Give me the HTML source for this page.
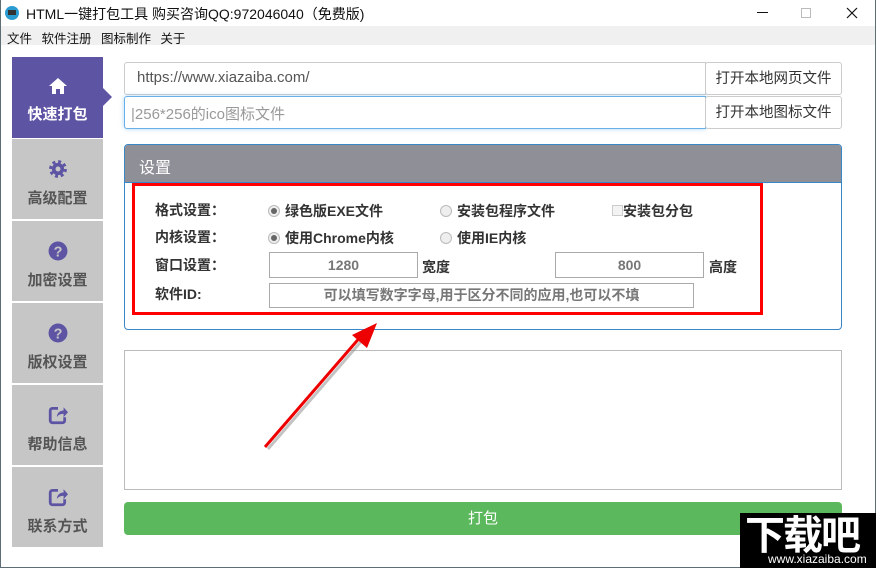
<!DOCTYPE html>
<html><head><meta charset="utf-8"><style>
*{margin:0;padding:0;box-sizing:border-box}
body{width:876px;height:568px;overflow:hidden;background:#fff;font-family:"Liberation Sans","Noto Sans CJK SC",sans-serif;position:relative;font-size:13px;color:#333}
.a{position:absolute}
.side{left:12px;width:91px;background:#c6c6c6;color:#555;text-align:center;font-weight:bold;font-size:15px}
.ic{display:block;margin:0 auto 8px}
.lbl{font-size:14px;color:#333;font-weight:bold}
.opt{font-size:14px;color:#333;font-weight:bold}
.rad{display:inline-block;width:12px;height:12px;border-radius:50%;border:1px solid #bbb;background:#eee;vertical-align:-1px;margin-right:5px;position:relative}
.rad.on::after{content:"";position:absolute;left:2px;top:2px;width:6px;height:6px;border-radius:50%;background:#666}
.box{border:1px solid #aaa;text-align:center;color:#777;font-size:14px;font-weight:bold;background:#fff}
.btn{border:1px solid #ccc;border-radius:3px;background:#fff;font-size:14.5px;color:#333;text-align:center;line-height:32px}
</style></head><body>
<div class="a" style="left:0;top:0;width:876px;height:568px;border:1px solid #5e6e74;border-top:none"></div>
<div class="a" style="left:5px;top:6px;width:14px;height:14px;border-radius:50%;background:#2a9bd0"></div>
<div class="a" style="left:8px;top:10px;width:8px;height:5px;background:#333"></div>
<div class="a" style="left:26px;top:4px;font-size:14px;color:#111">HTML一键打包工具 购买咨询QQ:972046040（免费版)</div>
<div class="a" style="left:757px;top:12px;width:11px;height:1px;background:#111"></div>
<div class="a" style="left:801px;top:8px;width:10px;height:10px;border:1px solid #bbb"></div>
<svg class="a" style="left:846px;top:7px" width="12" height="12" viewBox="0 0 12 12"><path d="M1 1L11 11M11 1L1 11" stroke="#111" stroke-width="1.2"/></svg>
<div class="a" style="left:1px;top:26px;width:874px;height:19px;background:#f0f0f0"></div>
<div class="a" style="left:7px;top:28px;font-size:12.5px;color:#111;word-spacing:6px">文件 软件注册 图标制作 关于</div>
<div class="a side" style="top:57px;height:81px;background:#5d55a4;color:#fff">
<svg class="ic" style="margin-top:20px" width="20" height="18" viewBox="0 0 20 18"><path d="M10 1L1 9h3v8h4v-5h4v5h4V9h3z" fill="#fff"/></svg>快速打包</div>
<div class="a" style="left:103px;top:88px;width:0;height:0;border-top:9px solid transparent;border-bottom:9px solid transparent;border-left:9px solid #5d55a4"></div>
<div class="a side" style="top:139px;height:80px"><svg class="ic" style="margin-top:20px" width="20" height="20" viewBox="0 0 18 18"><circle cx="9" cy="9" r="6" fill="none" stroke="#5d55a4" stroke-width="4" stroke-dasharray="2.4 2.3"/><circle cx="9" cy="9" r="5.5" fill="#5d55a4"/><circle cx="9" cy="9" r="2.2" fill="#c6c6c6"/></svg>高级配置</div>
<div class="a side" style="top:221px;height:80px"><svg class="ic" style="margin-top:20px" width="20" height="20" viewBox="0 0 18 18"><circle cx="9" cy="9" r="8.5" fill="#5d55a4"/><text x="9" y="14" font-size="13" font-weight="bold" fill="#c6c6c6" text-anchor="middle" font-family="Liberation Sans">?</text></svg>加密设置</div>
<div class="a side" style="top:303px;height:80px"><svg class="ic" style="margin-top:20px" width="20" height="20" viewBox="0 0 18 18"><circle cx="9" cy="9" r="8.5" fill="#5d55a4"/><text x="9" y="14" font-size="13" font-weight="bold" fill="#c6c6c6" text-anchor="middle" font-family="Liberation Sans">?</text></svg>版权设置</div>
<div class="a side" style="top:385px;height:80px"><svg class="ic" style="margin-top:20px" width="20" height="20" viewBox="0 0 18 18"><path d="M9 3H4a2 2 0 0 0-2 2v9a2 2 0 0 0 2 2h9a2 2 0 0 0 2-2v-3" fill="none" stroke="#5d55a4" stroke-width="2.5"/><path d="M8 11c0-4 3-6 6-6V2l4 4.5-4 4.5V8c-3 0-5 1-6 3z" fill="#5d55a4"/></svg>帮助信息</div>
<div class="a side" style="top:467px;height:80px"><svg class="ic" style="margin-top:20px" width="20" height="20" viewBox="0 0 18 18"><path d="M9 3H4a2 2 0 0 0-2 2v9a2 2 0 0 0 2 2h9a2 2 0 0 0 2-2v-3" fill="none" stroke="#5d55a4" stroke-width="2.5"/><path d="M8 11c0-4 3-6 6-6V2l4 4.5-4 4.5V8c-3 0-5 1-6 3z" fill="#5d55a4"/></svg>联系方式</div>
<div class="a" style="left:124px;top:62px;width:582px;height:33px;border:1px solid #ccc;border-radius:3px 0 0 3px;font-size:15px;color:#555;padding:6px 12px">https://www.xiazaiba.com/</div>
<div class="a btn" style="left:705px;top:62px;width:137px;height:33px">打开本地网页文件</div>
<div class="a" style="left:124px;top:96px;width:582px;height:33px;border:1px solid #66afe9;border-radius:3px 0 0 3px;box-shadow:0 0 5px rgba(102,175,233,.5);font-size:15px;color:#999;padding:6px 6px">|256*256的ico图标文件</div>
<div class="a btn" style="left:705px;top:96px;width:137px;height:33px">打开本地图标文件</div>
<div class="a" style="left:124px;top:144px;width:718px;height:186px;border:1px solid #3a87c8;border-radius:4px;overflow:hidden">
<div style="height:38px;background:#8f8f98;color:#fff;font-size:16px;padding:9px 14px;border-bottom:1px solid #3a87c8">设置</div></div>
<div class="a" style="left:132px;top:183px;width:631px;height:132px;border:3px solid #f00"></div>
<div class="a lbl" style="left:155px;top:200px">格式设置：</div>
<div class="a lbl" style="left:155px;top:227px">内核设置：</div>
<div class="a lbl" style="left:155px;top:255px">窗口设置：</div>
<div class="a lbl" style="left:155px;top:284px">软件ID:</div>
<div class="a opt" style="left:268px;top:201px"><span class="rad on"></span>绿色版EXE文件</div>
<div class="a opt" style="left:440px;top:201px"><span class="rad"></span>安装包程序文件</div>
<div class="a opt" style="left:612px;top:201px"><span style="display:inline-block;width:11px;height:11px;border:1px solid #ccc;background:#f3f3f3;vertical-align:0"></span>安装包分包</div>
<div class="a opt" style="left:268px;top:228px"><span class="rad on"></span>使用Chrome内核</div>
<div class="a opt" style="left:440px;top:228px"><span class="rad"></span>使用IE内核</div>
<div class="a box" style="left:269px;top:252px;width:149px;height:26px;line-height:24px">1280</div>
<div class="a opt" style="left:422px;top:257px">宽度</div>
<div class="a box" style="left:555px;top:252px;width:149px;height:26px;line-height:24px">800</div>
<div class="a opt" style="left:709px;top:257px">高度</div>
<div class="a box" style="left:269px;top:283px;width:425px;height:25px;line-height:23px">可以填写数字字母,用于区分不同的应用,也可以不填</div>
<div class="a" style="left:124px;top:350px;width:718px;height:140px;border:1px solid #bbb"></div>
<svg class="a" style="left:250px;top:315px" width="140" height="145" viewBox="0 0 140 145">
<line x1="18" y1="134" x2="115" y2="22" stroke="#888" stroke-width="3" opacity=".5"/>
<line x1="15" y1="132" x2="112" y2="20" stroke="#e00" stroke-width="3"/>
<path d="M127 8L102 20L117 33z" fill="#e00"/></svg>
<div class="a" style="left:124px;top:502px;width:718px;height:33px;background:#5cb85c;border-radius:4px;color:#fff;font-size:15px;text-align:center;line-height:33px">打包</div>
<div class="a" style="left:740px;top:513px;width:136px;height:55px;background:#000"></div>
<div class="a" style="left:745px;top:508px;color:#fff;font-size:40px;font-weight:bold;letter-spacing:-2px;font-family:'Noto Sans CJK SC',sans-serif;line-height:48px">下载吧</div>
<div class="a" style="left:768px;top:552px;color:#fff;font-size:12px">www.xiazaiba.com</div>
</body></html>
